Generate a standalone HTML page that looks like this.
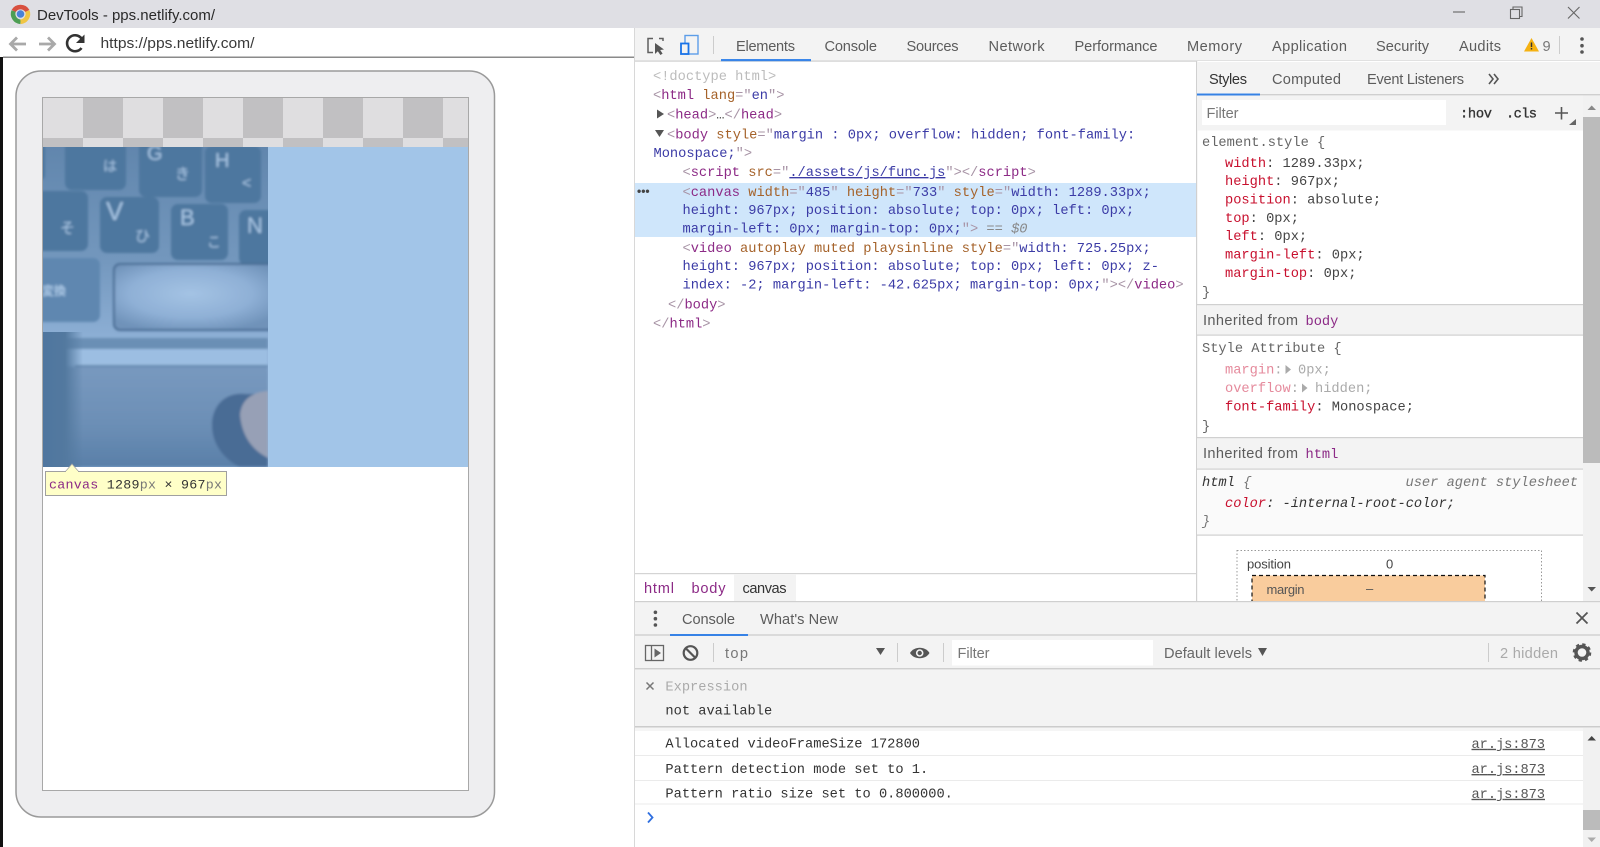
<!DOCTYPE html>
<html lang="en"><head><meta charset="utf-8"><title>DevTools - pps.netlify.com/</title>
<style>
html,body{margin:0;padding:0;width:1600px;height:847px;overflow:hidden;background:#fff}
svg{display:block;filter:blur(.35px)}
text{white-space:pre}
.s{font:14.6px "Liberation Sans",sans-serif;fill:#5c5c5c}
.m{font:13.7px "Liberation Mono",monospace;fill:#444}
.b{fill:#a894a6}.t{fill:#8c2a86}.a{fill:#a5622a}.v{fill:#3b3ba6}
.r{fill:#c8102e}
.k{font:19px "Liberation Sans","Noto Sans CJK JP",sans-serif;fill:#a9c6e4}
</style></head><body>
<svg width="1600" height="847" viewBox="0 0 1600 847" xmlns="http://www.w3.org/2000/svg">
<defs>
<filter id="bl" x="-5%" y="-5%" width="110%" height="110%"><feGaussianBlur stdDeviation="1.3"/></filter>
<filter id="bl2" x="-20%" y="-20%" width="140%" height="140%"><feGaussianBlur stdDeviation="6"/></filter>
<radialGradient id="sp" cx=".45" cy=".45" r=".6"><stop offset="0" stop-color="#a4c3e4"/><stop offset=".6" stop-color="#8fb0d6"/><stop offset="1" stop-color="#6f92b9"/></radialGradient>
<linearGradient id="pad" x1="0" y1="0" x2="0" y2="1"><stop offset="0" stop-color="#7899bf"/><stop offset=".6" stop-color="#6b8eb5"/><stop offset="1" stop-color="#597fa8"/></linearGradient>
<linearGradient id="base" x1="0" y1="0" x2="0" y2="1"><stop offset="0" stop-color="#6186ad"/><stop offset=".35" stop-color="#7397bd"/><stop offset=".62" stop-color="#8fb1d7"/><stop offset="1" stop-color="#8fb2d8"/></linearGradient>
<linearGradient id="lf" x1="0" y1="0" x2="1" y2="0"><stop offset="0" stop-color="#4f769f"/><stop offset=".55" stop-color="#53799f"/><stop offset="1" stop-color="#53799f" stop-opacity="0"/></linearGradient>
<clipPath id="imgc"><rect x="43" y="147" width="225" height="320"/></clipPath>
</defs>

<!-- window chrome -->
<rect width="1600" height="847" fill="#fff"/>
<rect width="1600" height="28" fill="#dfdfe4"/>
<rect x="0" y="57" width="3" height="790" fill="#111"/>
<rect x="3" y="56.5" width="632" height="1.5" fill="#8a8a8a"/>

<!-- chrome logo -->
<g fill="none" stroke-width="4.6">
<path d="M13.6 11 A8 8 0 0 1 27.4 11" stroke="#d8503f"/>
<path d="M13.6 11 A8 8 0 0 0 20.5 21.8" stroke="#4d9e53"/>
<path d="M27.4 11 A8 8 0 0 1 20.5 21.8" stroke="#f0c544"/>
</g>
<circle cx="20.5" cy="14" r="3.8" fill="#4a82d8"/>
<text class="s" x="37" y="20" textLength="178" lengthAdjust="spacingAndGlyphs" style="fill:#2a2a2a">DevTools - pps.netlify.com/</text>

<!-- nav -->
<g fill="none" stroke="#a9a9a9" stroke-width="2.8">
<path d="M26 44H11M17 37.5L10.5 44L17 50.5"/>
<path d="M39 44H54M48 37.5L54.5 44L48 50.5"/>
</g>
<path d="M81.5 48A8 8 0 1 1 81.5 38.5" fill="none" stroke="#333" stroke-width="2.6"/>
<path d="M84.5 34.5V43H76Z" fill="#333"/>
<text class="s" x="100.5" y="48" textLength="154" lengthAdjust="spacingAndGlyphs" style="fill:#3a3a3a">https://pps.netlify.com/</text>

<!-- device frame -->
<rect x="16" y="71" width="478.5" height="746" rx="25" fill="#eeeef0" stroke="#9a9a9a" stroke-width="1.5"/>
<rect x="42.5" y="97.5" width="426" height="693" fill="#fff" stroke="#a8a8a8" stroke-width="1"/>

<!-- checkerboard -->
<g>
<rect x="43" y="98" width="425" height="49" fill="#dfdee0"/>
<g fill="#c1c0c2">
<rect x="83" y="98" width="40" height="40"/><rect x="163" y="98" width="40" height="40"/><rect x="243" y="98" width="40" height="40"/><rect x="323" y="98" width="40" height="40"/><rect x="403" y="98" width="40" height="40"/>
<rect x="43" y="138" width="40" height="9"/><rect x="123" y="138" width="40" height="9"/><rect x="203" y="138" width="40" height="9"/><rect x="283" y="138" width="40" height="9"/><rect x="363" y="138" width="40" height="9"/><rect x="443" y="138" width="25" height="9"/>
</g>
</g>

<!-- canvas overlay -->
<rect x="43" y="147" width="425" height="320" fill="#a2c5e8"/>
<g clip-path="url(#imgc)">
<rect x="43" y="147" width="225" height="320" fill="url(#base)"/>
<g filter="url(#bl)">
<g fill="#4d779f">
<rect x="30" y="140" width="15" height="40" rx="5"/>
<rect x="65" y="140" width="61" height="50" rx="7"/>
<rect x="139" y="140" width="63" height="57" rx="7"/>
<rect x="205" y="146" width="56" height="57" rx="7"/>
<rect x="30" y="191" width="58" height="60" rx="7"/>
<rect x="100" y="197" width="59" height="56" rx="7"/>
<rect x="171" y="204" width="57" height="56" rx="7"/>
<rect x="239" y="210" width="40" height="55" rx="7"/>
<rect x="30" y="258" width="70" height="64" rx="7" fill="#5f87b0"/>
</g>
<rect x="114" y="264" width="170" height="66" rx="6" fill="url(#sp)" stroke="#4a6d94" stroke-width="2"/>
<rect x="43" y="338" width="225" height="11" fill="#6b8fb5"/>
<rect x="43" y="349" width="225" height="16" fill="#9cbee2"/>
<rect x="75" y="365" width="193" height="2.5" fill="#6488ae"/>
<rect x="43" y="367" width="225" height="100" fill="url(#pad)"/>
<path d="M245 394C226 392 212 405 212 425C212 445 225 460 240 467H268V394Z" fill="#486c95"/>
<path d="M268 391C252 392 241 400 240 415C242 436 252 450 268 458Z" fill="#97a0b6"/>
<text class="k" x="103" y="171" style="font-size:14px">は</text>
<text class="k" x="147" y="160" style="font-size:20px">G</text>
<text class="k" x="175" y="179" style="font-size:15px">き</text>
<text class="k" x="215" y="167" style="font-size:20px">H</text>
<text class="k" x="242" y="188" style="font-size:16px">&lt;</text>
<text class="k" x="106" y="220" style="font-size:26px">V</text>
<text class="k" x="180" y="225" style="font-size:22px">B</text>
<text class="k" x="247" y="233" style="font-size:22px">N</text>
<text class="k" x="60" y="233" style="font-size:15px">そ</text>
<text class="k" x="135" y="241" style="font-size:15px">ひ</text>
<text class="k" x="207" y="247" style="font-size:14px">こ</text>
<text class="k" x="42" y="295" style="font-size:12px;font-weight:bold">変換</text>
</g>
<rect x="43" y="332" width="40" height="135" fill="url(#lf)"/>
</g>

<!-- tooltip -->
<path d="M65 472L72 464L79 472Z" fill="#ffffc8" stroke="#a8a8a8" stroke-width=".8"/>
<rect x="45.5" y="471.5" width="181" height="24" fill="#ffffc8" stroke="#a0a0a0" stroke-width="1"/>
<rect x="66" y="471" width="12" height="2" fill="#ffffc8"/>
<text class="m" x="49" y="488.5" textLength="173" lengthAdjust="spacing" style="font-size:13.3px"><tspan fill="#8c2a86">canvas</tspan><tspan fill="#333"> 1289</tspan><tspan fill="#777">px</tspan><tspan fill="#333"> × 967</tspan><tspan fill="#777">px</tspan></text>

<!-- devtools chrome -->
<rect x="635" y="28" width="965" height="33" fill="#f3f3f3"/>
<rect x="635" y="60.5" width="965" height="1.2" fill="#cfcfcf"/>
<rect x="634" y="28" width="1" height="819" fill="#d8d8d8"/>
<g fill="none">
<path d="M653 38.5H648V52.5H653M659 38.5H663V41" stroke="#5f5f5f" stroke-width="1.5"/>
<path d="M655 43L655 54L657.8 51.2L660.4 55L662.6 53.6L660.2 50L664 49.5Z" fill="#555" stroke="none"/>
<rect x="685" y="35.5" width="13" height="18.5" stroke="#5c9de8" stroke-width="1.4"/>
<rect x="681" y="43.5" width="7.5" height="10.5" fill="#f3f3f3" stroke="#1a73e8" stroke-width="1.8"/>
</g>
<rect x="713" y="36" width="1" height="18" fill="#ccc"/>
<rect x="721" y="59" width="90" height="2.2" fill="#1a73e8" opacity=".85"/>
<text class="s" x="736" y="51" textLength="59">Elements</text>
<text class="s" x="824.5" y="51" textLength="52.5">Console</text>
<text class="s" x="906.5" y="51" textLength="52">Sources</text>
<text class="s" x="988.5" y="51" textLength="56">Network</text>
<text class="s" x="1074.5" y="51" textLength="83">Performance</text>
<text class="s" x="1187" y="51" textLength="55">Memory</text>
<text class="s" x="1272" y="51" textLength="75">Application</text>
<text class="s" x="1376" y="51" textLength="53">Security</text>
<text class="s" x="1459" y="51" textLength="42">Audits</text>
<path d="M1531.5 38L1539 51.5H1524Z" fill="#f5b212"/>
<rect x="1530.8" y="42.5" width="1.4" height="4.5" fill="#333"/><rect x="1530.8" y="48" width="1.4" height="1.5" fill="#333"/>
<text class="s" x="1542.5" y="51" textLength="8" style="fill:#777">9</text>
<rect x="1559" y="36" width="1" height="18" fill="#ccc"/>
<g fill="#555"><circle cx="1582" cy="39" r="1.8"/><circle cx="1582" cy="45.7" r="1.8"/><circle cx="1582" cy="52" r="1.8"/></g>

<!-- window controls -->
<g fill="none" stroke="#666" stroke-width="1.1">
<path d="M1453 12H1465"/>
<rect x="1510.5" y="9.5" width="9" height="9"/>
<path d="M1513 9.5V7H1522V16.5H1519.5"/>
<path d="M1568 7L1579.5 18.5M1579.5 7L1568 18.5"/>
</g>

<!-- elements tree -->
<rect x="635" y="183" width="561" height="54" fill="#cfe6fb"/>
<text class="m" x="653" y="80" style="fill:#bcbcbc">&lt;!doctype html&gt;</text>
<text class="m" x="653" y="99"><tspan class="b">&lt;</tspan><tspan class="t">html</tspan> <tspan class="a">lang</tspan><tspan class="b">="</tspan><tspan class="v">en</tspan><tspan class="b">"&gt;</tspan></text>
<path d="M657 109.5L664 114L657 118.5Z" fill="#555"/>
<text class="m" x="667" y="118.5"><tspan class="b">&lt;</tspan><tspan class="t">head</tspan><tspan class="b">&gt;</tspan><tspan fill="#555">…</tspan><tspan class="b">&lt;/</tspan><tspan class="t">head</tspan><tspan class="b">&gt;</tspan></text>
<path d="M655 130H664L659.5 137Z" fill="#555"/>
<text class="m" x="667" y="138.5"><tspan class="b">&lt;</tspan><tspan class="t">body</tspan> <tspan class="a">style</tspan><tspan class="b">="</tspan><tspan class="v">margin : 0px; overflow: hidden; font-family:</tspan></text>
<text class="m" x="653.5" y="157"><tspan class="v">Monospace;</tspan><tspan class="b">"&gt;</tspan></text>
<text class="m" x="682.5" y="176"><tspan class="b">&lt;</tspan><tspan class="t">script</tspan> <tspan class="a">src</tspan><tspan class="b">="</tspan><tspan class="v" text-decoration="underline">./assets/js/func.js</tspan><tspan class="b">"&gt;&lt;/</tspan><tspan class="t">script</tspan><tspan class="b">&gt;</tspan></text>
<text x="637" y="195" style="font:bold 12px 'Liberation Sans',sans-serif;fill:#444">•••</text>
<text class="m" x="682.5" y="196"><tspan class="b">&lt;</tspan><tspan class="t">canvas</tspan> <tspan class="a">width</tspan><tspan class="b">="</tspan><tspan class="v">485</tspan><tspan class="b">"</tspan> <tspan class="a">height</tspan><tspan class="b">="</tspan><tspan class="v">733</tspan><tspan class="b">"</tspan> <tspan class="a">style</tspan><tspan class="b">="</tspan><tspan class="v">width: 1289.33px;</tspan></text>
<text class="m" x="682.5" y="214"><tspan class="v">height: 967px; position: absolute; top: 0px; left: 0px;</tspan></text>
<text class="m" x="682.5" y="232.5"><tspan class="v">margin-left: 0px; margin-top: 0px;</tspan><tspan class="b">"&gt;</tspan><tspan fill="#888"> == </tspan><tspan fill="#888" font-style="italic">$0</tspan></text>
<text class="m" x="682.5" y="252"><tspan class="b">&lt;</tspan><tspan class="t">video</tspan> <tspan class="a">autoplay muted playsinline style</tspan><tspan class="b">="</tspan><tspan class="v">width: 725.25px;</tspan></text>
<text class="m" x="682.5" y="270"><tspan class="v">height: 967px; position: absolute; top: 0px; left: 0px; z-</tspan></text>
<text class="m" x="682.5" y="288.5"><tspan class="v">index: -2; margin-left: -42.625px; margin-top: 0px;</tspan><tspan class="b">"&gt;&lt;/</tspan><tspan class="t">video</tspan><tspan class="b">&gt;</tspan></text>
<text class="m" x="668" y="308.5"><tspan class="b">&lt;/</tspan><tspan class="t">body</tspan><tspan class="b">&gt;</tspan></text>
<text class="m" x="653" y="327.5"><tspan class="b">&lt;/</tspan><tspan class="t">html</tspan><tspan class="b">&gt;</tspan></text>

<!-- breadcrumb -->
<rect x="635" y="573" width="561" height="1.2" fill="#d4d4d4"/>
<rect x="734" y="574" width="62" height="27" fill="#f3f3f3"/>
<text class="s" x="644" y="593" textLength="30" style="fill:#8c2a86">html</text>
<text class="s" x="691.5" y="593" textLength="34" style="fill:#8c2a86">body</text>
<text class="s" x="742.5" y="593" textLength="44" style="fill:#333">canvas</text>

<!-- sidebar -->
<rect x="1196" y="61" width="404" height="540" fill="#fff"/>
<rect x="1196" y="61" width="1.2" height="540" fill="#d0d0d0"/>
<rect x="1197" y="62" width="403" height="33" fill="#f3f3f3"/>
<rect x="1197" y="94" width="403" height="1.4" fill="#cfcfcf"/>
<rect x="1197" y="93.5" width="63" height="2" fill="#1a73e8" opacity=".85"/>
<text class="s" x="1209" y="84" textLength="38" style="fill:#333">Styles</text>
<text class="s" x="1272" y="84" textLength="69">Computed</text>
<text class="s" x="1367" y="84" textLength="97">Event Listeners</text>
<path d="M1489 74L1493 79L1489 84M1494 74L1498 79L1494 84" fill="none" stroke="#555" stroke-width="1.6"/>
<rect x="1197" y="95.5" width="386" height="35" fill="#f3f3f3"/>
<rect x="1202" y="100" width="244" height="25" fill="#fff"/>
<text class="s" x="1206.5" y="118" textLength="32" style="fill:#777">Filter</text>
<text class="m" x="1460" y="117.5" textLength="32" style="fill:#333;stroke:#333;stroke-width:.35">:hov</text>
<text class="m" x="1506" y="117.5" textLength="31" style="fill:#333;stroke:#333;stroke-width:.35">.cls</text>
<path d="M1561.5 107V119.5M1555 113H1568" stroke="#555" stroke-width="1.6"/>
<path d="M1576 119V125H1569Z" fill="#666"/>

<text class="m" x="1202" y="146" style="fill:#666">element.style {</text>
<text class="m" x="1225" y="167"><tspan class="r">width</tspan>: 1289.33px;</text>
<text class="m" x="1225" y="185"><tspan class="r">height</tspan>: 967px;</text>
<text class="m" x="1225" y="203.5"><tspan class="r">position</tspan>: absolute;</text>
<text class="m" x="1225" y="222"><tspan class="r">top</tspan>: 0px;</text>
<text class="m" x="1225" y="240"><tspan class="r">left</tspan>: 0px;</text>
<text class="m" x="1225" y="258.5"><tspan class="r">margin-left</tspan>: 0px;</text>
<text class="m" x="1225" y="277"><tspan class="r">margin-top</tspan>: 0px;</text>
<text class="m" x="1202" y="296" style="fill:#666">}</text>

<rect x="1197" y="304" width="386" height="31" fill="#f3f3f3"/>
<rect x="1197" y="304" width="386" height="1.2" fill="#d0d0d0"/>
<rect x="1197" y="334.5" width="386" height="1.2" fill="#d0d0d0"/>
<text class="s" x="1203" y="325" textLength="95">Inherited from</text>
<text class="m" x="1305.5" y="325" style="fill:#8c2a86">body</text>

<text class="m" x="1202" y="352" style="fill:#666">Style Attribute {</text>
<text class="m" x="1225" y="373.5" style="fill:#aaa"><tspan fill="#e58a9c">margin</tspan>:</text>
<path d="M1285.5 365L1291 369.5L1285.5 374Z" fill="#aaa"/>
<text class="m" x="1298" y="373.5" style="fill:#aaa">0px;</text>
<text class="m" x="1225" y="392" style="fill:#aaa"><tspan fill="#e58a9c">overflow</tspan>:</text>
<path d="M1302 383.5L1307.5 388L1302 392.5Z" fill="#aaa"/>
<text class="m" x="1315" y="392" style="fill:#aaa">hidden;</text>
<text class="m" x="1225" y="410.5"><tspan class="r">font-family</tspan>: Monospace;</text>
<text class="m" x="1202" y="430" style="fill:#666">}</text>

<rect x="1197" y="437" width="386" height="32" fill="#f3f3f3"/>
<rect x="1197" y="437" width="386" height="1.2" fill="#d0d0d0"/>
<rect x="1197" y="468.5" width="386" height="1.2" fill="#d0d0d0"/>
<text class="s" x="1203" y="458" textLength="95">Inherited from</text>
<text class="m" x="1305.5" y="458" style="fill:#8c2a86">html</text>

<rect x="1197" y="470" width="386" height="65" fill="#fafafa"/>
<g style="font-style:italic">
<text class="m" x="1202" y="486" style="font-style:italic;fill:#333">html <tspan fill="#777">{</tspan></text>
<text class="m" x="1405.5" y="486" style="font-style:italic;fill:#777">user agent stylesheet</text>
<text class="m" x="1225" y="507" style="font-style:italic;fill:#333"><tspan class="r">color</tspan>: -internal-root-color;</text>
<text class="m" x="1202" y="525" style="font-style:italic;fill:#777">}</text>
</g>
<rect x="1197" y="534.5" width="386" height="1.2" fill="#d0d0d0"/>

<!-- box model -->
<rect x="1237" y="550.5" width="304.5" height="60" fill="#fff" stroke="#999" stroke-width="1" stroke-dasharray="1.5 2"/>
<text class="s" x="1247" y="568.5" textLength="44" style="font-size:13px;fill:#444">position</text>
<text class="s" x="1386" y="568.5" style="font-size:13px;fill:#444">0</text>
<rect x="1252" y="575.5" width="233" height="40" fill="#f9cc9d" stroke="#111" stroke-width="1.2" stroke-dasharray="4 3"/>
<text class="s" x="1266.5" y="594" textLength="38" style="font-size:13px;fill:#555">margin</text>
<text class="s" x="1366" y="593" style="font-size:13px;fill:#555">–</text>

<!-- upper scrollbar -->
<rect x="1583" y="95.5" width="17" height="506" fill="#f1f1f1"/>
<rect x="1583" y="117" width="17" height="346" fill="#bbbbbb"/>
<path d="M1587.5 110L1591.7 105.5L1596 110Z" fill="#888"/>
<path d="M1587.5 587H1596L1591.7 591.5Z" fill="#555"/>

<!-- drawer -->
<rect x="635" y="601" width="965" height="125" fill="#f3f3f3"/>
<rect x="635" y="601" width="965" height="1.2" fill="#cfcfcf"/>
<rect x="635" y="634.3" width="965" height="1.4" fill="#cfcfcf"/>
<rect x="670" y="634" width="78" height="2" fill="#1a73e8" opacity=".85"/>
<g fill="#555"><circle cx="655.4" cy="612.3" r="1.8"/><circle cx="655.4" cy="618.7" r="1.8"/><circle cx="655.4" cy="625" r="1.8"/></g>
<text class="s" x="682" y="624" textLength="53">Console</text>
<text class="s" x="760" y="624" textLength="78">What's New</text>
<path d="M1576.5 612.5L1587.5 623.5M1587.5 612.5L1576.5 623.5" stroke="#555" stroke-width="1.8"/>

<rect x="635" y="668" width="965" height="1.4" fill="#cfcfcf"/>
<g fill="none" stroke="#666" stroke-width="1.3">
<rect x="645.5" y="645.5" width="18" height="15"/><path d="M651.5 645.5V660.5"/>
</g>
<path d="M654.5 648.5L661 653L654.5 657.5Z" fill="#666"/>
<circle cx="690.5" cy="653" r="6.8" fill="none" stroke="#555" stroke-width="2.2"/>
<path d="M686 648.5L695 657.5" stroke="#555" stroke-width="2.2"/>
<rect x="713" y="643" width="1" height="19" fill="#ccc"/>
<text class="s" x="725" y="658" textLength="23" style="fill:#777">top</text>
<path d="M876 648H885L880.5 655Z" fill="#555"/>
<rect x="897" y="643" width="1" height="19" fill="#ccc"/>
<path d="M910 653C914 646 925.5 646 929.5 653C925.5 660 914 660 910 653Z" fill="#555"/>
<circle cx="919.7" cy="653" r="3.8" fill="#f3f3f3"/><circle cx="919.7" cy="653" r="2.2" fill="#555"/>
<rect x="943" y="643" width="1" height="19" fill="#ccc"/>
<rect x="952" y="640" width="201" height="25.5" fill="#fff"/>
<text class="s" x="957.5" y="658" textLength="32" style="fill:#777">Filter</text>
<text class="s" x="1164" y="658" textLength="88" style="fill:#666">Default levels</text>
<path d="M1258 648H1267L1262.5 656Z" fill="#555"/>
<rect x="1488" y="643" width="1" height="19" fill="#ccc"/>
<text class="s" x="1500" y="658" textLength="58" style="fill:#aaa">2 hidden</text>
<circle cx="1582" cy="652.5" r="6" fill="none" stroke="#555" stroke-width="3.4"/>
<circle cx="1582" cy="652.5" r="8" fill="none" stroke="#555" stroke-width="2.6" stroke-dasharray="3.2 3.08"/>

<!-- live expression -->
<path d="M646.5 682.5L653.5 689.5M653.5 682.5L646.5 689.5" stroke="#777" stroke-width="1.5"/>
<text class="m" x="665.4" y="690.5" style="fill:#aaa">Expression</text>
<text class="m" x="665.4" y="714.5" style="fill:#333">not available</text>
<rect x="635" y="726" width="965" height="1.6" fill="#cccccc"/>
<rect x="635" y="727.6" width="965" height="3.4" fill="#f5f5f5"/>

<!-- console messages -->
<text class="m" x="665.4" y="747.5" style="fill:#333">Allocated videoFrameSize 172800</text>
<rect x="635" y="755" width="948" height="1" fill="#ebebeb"/>
<text class="m" x="665.4" y="772.8" style="fill:#333">Pattern detection mode set to 1.</text>
<rect x="635" y="780" width="948" height="1" fill="#ebebeb"/>
<text class="m" x="665.4" y="797.5" style="fill:#333">Pattern ratio size set to 0.800000.</text>
<rect x="635" y="803.5" width="948" height="1" fill="#ebebeb"/>
<g style="fill:#555">
<text class="m" x="1471.5" y="747.8" textLength="73.5" style="fill:#555" text-decoration="underline">ar.js:873</text>
<text class="m" x="1471.5" y="773" textLength="73.5" style="fill:#555" text-decoration="underline">ar.js:873</text>
<text class="m" x="1471.5" y="797.8" textLength="73.5" style="fill:#555" text-decoration="underline">ar.js:873</text>
</g>
<path d="M648 812.5L652.5 817.5L648 822.5" fill="none" stroke="#2f6fe0" stroke-width="1.8"/>

<!-- lower scrollbar -->
<rect x="1583" y="728" width="17" height="119" fill="#f1f1f1"/>
<rect x="1583" y="810" width="17" height="20" fill="#bbbbbb"/>
<path d="M1587.5 740.5L1591.7 736L1596 740.5Z" fill="#444"/>
<path d="M1587.5 837.5H1596L1591.7 842Z" fill="#aaa"/>
</svg>
</body></html>
